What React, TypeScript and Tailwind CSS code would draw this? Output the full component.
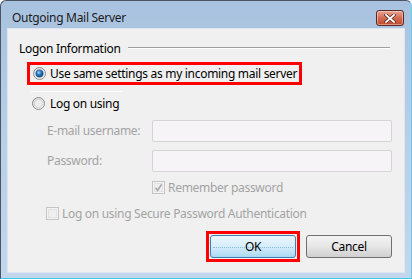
import React from "react";

const Radio = ({ checked, id }: { checked: boolean; id: string }) => (
  <svg width="13" height="13" viewBox="0 0 13 13" className="shrink-0">
    <defs>
      <linearGradient id={`${id}-o`} x1="0" y1="0" x2="1" y2="1">
        <stop offset="0" stopColor="#d8d8d8" />
        <stop offset="1" stopColor="#ffffff" />
      </linearGradient>
      <radialGradient id={`${id}-b`} cx="0.4" cy="0.35" r="0.7">
        <stop offset="0" stopColor="#9fd6f8" />
        <stop offset="0.45" stopColor="#2a7fcf" />
        <stop offset="1" stopColor="#0d3f76" />
      </radialGradient>
    </defs>
    <circle cx="6.5" cy="6.5" r="6" fill={`url(#${id}-o)`} stroke="#8c8c8c" strokeWidth="1" />
    <circle cx="6.5" cy="6.5" r="4.3" fill="#ececec" stroke="#c9c9c9" strokeWidth="0.8" />
    {checked && <circle cx="6.5" cy="6.5" r="3.6" fill={`url(#${id}-b)`} stroke="#1b4c80" strokeWidth="0.7" />}
  </svg>
);

const DisabledCheck = ({ checked }: { checked: boolean }) => (
  <svg width="13" height="13" viewBox="0 0 13 13" className="shrink-0">
    <rect x="0.5" y="0.5" width="12" height="12" fill="#f4f4f4" stroke="#c4c4c4" />
    <rect x="2.5" y="2.5" width="8" height="8" fill="#efefef" stroke="#e2e2e2" />
    {checked && (
      <path d="M3.5 6.8 L5.6 9.3 L9.6 3.4" fill="none" stroke="#a9a9a9" strokeWidth="1.6" />
    )}
  </svg>
);

export default function App() {
  const font = { fontFamily: '"Noto Sans", "Open Sans", sans-serif' };
  return (
    <div
      className="w-[412px] h-[279px] flex flex-col rounded-t-[6px] border border-[#4b5563] border-r-[#62cdf0] border-b-[#3cc4ef] bg-gradient-to-b from-[#a8c2df] via-[#b9cfe8] to-[#c2d6ec] px-[6px] pb-[5px] text-[12px] tracking-[-0.3px] whitespace-nowrap"
      style={font}
    >
      {/* Title bar */}
      <div className="h-[27px] flex items-start justify-between shrink-0">
        <div className="ml-[5px] mt-[9px] leading-[16px] text-[#1b1b1b]">Outgoing Mail Server</div>
        <div className="mt-[9px] mr-[1px] w-[28px] h-[16px] rounded-[3px] border border-[#5a2a26] bg-gradient-to-b from-[#e7a797] via-[#d26a52] to-[#c44a2f] flex items-center justify-center shadow-[inset_0_0_0_1px_rgba(255,220,210,0.5)]">
          <svg width="12" height="9" viewBox="0 0 12 9">
            <path d="M2 1 L10 8 M10 1 L2 8" stroke="#5c2a22" strokeWidth="3.2" strokeLinecap="square" />
            <path d="M2 1 L10 8 M10 1 L2 8" stroke="#ffffff" strokeWidth="1.8" strokeLinecap="square" />
          </svg>
        </div>
      </div>

      {/* Body */}
      <div className="flex-1 bg-[#f0f0f0] border border-[#dde6f0] flex flex-col">
        {/* group header */}
        <div className="mt-[13px] h-[14px] flex items-center">
          <span className="ml-[11px] leading-[14px] text-black">Logon Information</span>
          <div className="ml-[7px] mr-[14px] flex-1 flex flex-col self-start mt-[5px]">
            <div className="h-[1px] bg-[#a0a0a0]" />
            <div className="h-[1px] bg-white" />
          </div>
        </div>

        {/* red box radio */}
        <div className="mt-[6px] ml-[19px] w-[275px] h-[23px] border-[3px] border-[#ff0000] flex items-center">
          <div className="ml-[3px]">
            <Radio checked id="r1" />
          </div>
          <span className="ml-[4px] leading-[14px] text-black">Use same settings as my incoming mail server</span>
        </div>

        <div className="mt-[6px] ml-[23px] w-[91px] h-[1px] bg-white" />

        {/* log on using */}
        <div className="mt-[5px] ml-[24px] h-[13px] flex items-center">
          <Radio checked={false} id="r2" />
          <span className="ml-[5px] leading-[14px] text-black">Log on using</span>
        </div>

        {/* email */}
        <div className="mt-[10px] flex items-center h-[22px]">
          <span className="ml-[39px] w-[105px] text-[#a3a3a3] leading-[14px]">E-mail username:</span>
          <div className="w-[240px] h-[22px] rounded-[2px] border border-[#d4d4d4] bg-[#f6f4f6]" />
        </div>

        {/* password */}
        <div className="mt-[8px] flex items-center h-[22px]">
          <span className="ml-[39px] w-[105px] text-[#a3a3a3] leading-[14px]">Password:</span>
          <div className="w-[240px] h-[22px] rounded-[2px] border border-[#d4d4d4] bg-[#f6f4f6]" />
        </div>

        {/* remember */}
        <div className="mt-[9px] ml-[144px] h-[13px] flex items-center">
          <DisabledCheck checked />
          <span className="ml-[3px] text-[#a3a3a3] leading-[14px]">Remember password</span>
        </div>

        {/* SPA */}
        <div className="mt-[13px] ml-[38px] h-[13px] flex items-center">
          <DisabledCheck checked={false} />
          <span className="ml-[3px] text-[#a3a3a3] leading-[14px]">Log on using Secure Password Authentication</span>
        </div>

        {/* buttons */}
        <div className="mt-[11px] flex items-center justify-end pr-[12px]">
          <div className="border-[3px] border-[#ff0000] p-[1px]">
            <div className="relative w-[86px] h-[23px] rounded-[3px] border border-[#3c7fb1] bg-gradient-to-b from-[#ecf7fd] via-[#d6eefb] to-[#aad9f3] flex items-center justify-center text-black">
              <div className="absolute left-[2px] right-[2px] top-[11px] h-[1px] border-t border-dotted border-[#8fb8d4]" />
              <span className="relative leading-[14px]">OK</span>
            </div>
          </div>
          <div className="ml-[6px] w-[86px] h-[23px] rounded-[3px] border border-[#707070] bg-gradient-to-b from-[#f3f3f3] via-[#e6e6e6] to-[#d0d0d0] flex items-center justify-center text-black">
            <span className="leading-[14px]">Cancel</span>
          </div>
        </div>
      </div>
    </div>
  );
}
